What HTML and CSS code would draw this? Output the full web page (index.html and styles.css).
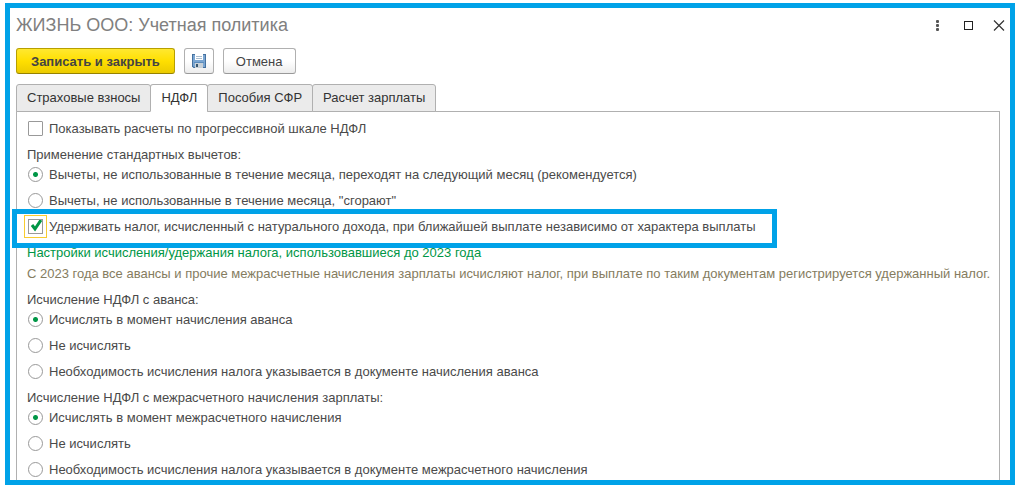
FILE: index.html
```html
<!DOCTYPE html>
<html lang="ru">
<head>
    <meta charset="UTF-8">
    <meta name="viewport" content="width=device-width, initial-scale=1.0">
    <title>ЖИЗНЬ ООО: Учетная политика</title>
    <link rel="stylesheet" href="styles.css">
</head>
<body>
    <div class="window">
        <header class="title-bar">
            <h1>ЖИЗНЬ ООО: Учетная политика</h1>
            <div class="window-controls">
                <button type="button" class="window-btn" aria-label="Ещё">
                    <svg width="16" height="16" viewBox="0 0 16 16" fill="#555">
                        <rect x="6" y="3" width="3" height="3" rx="1"/>
                        <rect x="6" y="7" width="3" height="3" rx="1"/>
                        <rect x="6" y="11" width="3" height="3" rx="1"/>
                    </svg>
                </button>
                <button type="button" class="window-btn" aria-label="Развернуть">
                    <svg width="16" height="16" viewBox="0 0 16 16" fill="none" stroke="#222">
                        <rect x="3.5" y="4.5" width="8" height="8"/>
                    </svg>
                </button>
                <button type="button" class="window-btn" aria-label="Закрыть">
                    <svg width="16" height="16" viewBox="0 0 16 16" fill="none" stroke="#333" stroke-width="1.2">
                        <path d="M2 3.500l10 10M12 3.500l-10 10"/>
                    </svg>
                </button>
            </div>
        </header>

        <div class="toolbar">
            <button type="button" class="btn btn-primary">Записать и закрыть</button>
            <button type="button" class="btn btn-icon" aria-label="Записать">
                <svg width="14" height="14" viewBox="0 0 14 14">
                    <path d="M0 0h14v14H1.500L0 12.500z" fill="#45719f"/>
                    <path d="M1 1h12v12H2l-1-1z" fill="#7ba6d2"/>
                    <rect x="3" y="0" width="8" height="6" fill="#fff"/>
                    <path d="M4 2.500h6M4 4.500h6" stroke="#a9bccd"/>
                    <path d="M2 8h10v1H2z" fill="#5d8dbd"/>
                    <rect x="3" y="9" width="8" height="5" fill="#c9d1d8"/>
                    <rect x="4" y="10" width="2" height="3" fill="#36566f"/>
                </svg>
            </button>
            <button type="button" class="btn btn-cancel">Отмена</button>
        </div>

        <div class="tabs" role="tablist">
            <button type="button" class="tab" role="tab">Страховые взносы</button>
            <button type="button" class="tab active" role="tab" aria-selected="true">НДФЛ</button>
            <button type="button" class="tab" role="tab">Пособия СФР</button>
            <button type="button" class="tab" role="tab">Расчет зарплаты</button>
        </div>

        <form class="panel">
            <label class="option"><input type="checkbox" name="progressive">Показывать расчеты по прогрессивной шкале НДФЛ</label>

            <h2 class="group-title">Применение стандартных вычетов:</h2>
            <label class="option"><input type="radio" name="deductions" checked>Вычеты, не использованные в течение месяца, переходят на следующий месяц (рекомендуется)</label>
            <label class="option"><input type="radio" name="deductions">Вычеты, не использованные в течение месяца, "сгорают"</label>
            <label class="option highlighted"><input type="checkbox" name="withhold" checked>Удерживать налог, исчисленный с натурального дохода, при ближайшей выплате независимо от характера выплаты</label>

            <a href="#" class="settings-link">Настройки исчисления/удержания налога, использовавшиеся до 2023 года</a>
            <p class="note">С 2023 года все авансы и прочие межрасчетные начисления зарплаты исчисляют налог, при выплате по таким документам регистрируется удержанный налог.</p>

            <h2 class="group-title">Исчисление НДФЛ с аванса:</h2>
            <label class="option"><input type="radio" name="advance" checked>Исчислять в момент начисления аванса</label>
            <label class="option"><input type="radio" name="advance">Не исчислять</label>
            <label class="option"><input type="radio" name="advance">Необходимость исчисления налога указывается в документе начисления аванса</label>

            <h2 class="group-title">Исчисление НДФЛ с межрасчетного начисления зарплаты:</h2>
            <label class="option"><input type="radio" name="interim" checked>Исчислять в момент межрасчетного начисления</label>
            <label class="option"><input type="radio" name="interim">Не исчислять</label>
            <label class="option"><input type="radio" name="interim">Необходимость исчисления налога указывается в документе межрасчетного начисления</label>
        </form>
    </div>
</body>
</html>
```

FILE: styles.css
```css
* {
    box-sizing: border-box;
}

body {
    margin: 0;
    padding: 3px 6px 7px 5px;
    height: 100vh;
    background-color: white;
    color: #4a4a4a;
    font-family: "Liberation Sans", Arial, sans-serif;
    font-size: 13px;
    line-height: 14px;
}

button {
    font-family: inherit;
    font-size: 13px;
    color: #444;
    cursor: pointer;
}

.window {
    display: flex;
    flex-direction: column;
    height: 100%;
    padding: 0 10px 0 6px;
    border: 5px solid #00a2e8;
    overflow: hidden;
}

.title-bar {
    display: flex;
    justify-content: space-between;
    align-items: center;
    height: 34px;
    flex-shrink: 0;
}

h1 {
    margin: 0;
    color: #808080;
    font-size: 18px;
    font-weight: normal;
    line-height: 20px;
}

.window-controls {
    display: flex;
    gap: 15px;
    margin-right: -8px;
}

.window-btn {
    display: flex;
    padding: 0;
    border: none;
    background: none;
}

.toolbar {
    display: flex;
    gap: 9px;
    margin: 6px 0 10px;
}

.btn {
    height: 26px;
    padding: 0 12px;
    border: 1px solid #b0b0b0;
    border-bottom-color: #999;
    border-radius: 3px;
    background: linear-gradient(#fff 50%, #ececec);
}

.btn-primary {
    padding: 0 14px;
    border-color: #b79f00;
    border-bottom-color: #968200;
    background: linear-gradient(#ffe830, #ffdf00 50%, #ebcb00);
    font-weight: bold;
}

.btn-icon {
    display: flex;
    align-items: center;
    justify-content: center;
    width: 30px;
    padding: 0;
}

.tabs {
    display: flex;
    flex-shrink: 0;
    z-index: 1;
}

.tab {
    height: 28px;
    padding: 0 10px 2px;
    margin-right: -1px;
    border: 1px solid #b0b0b0;
    border-radius: 3px 3px 0 0;
    background-color: #ebebeb;
    color: #333;
}

.tab.active {
    border-bottom-color: white;
    background-color: white;
}

.panel {
    display: flex;
    flex-direction: column;
    align-items: flex-start;
    flex: 1 0 auto;
    margin-top: -1px;
    padding: 4px 10px 0;
    border: 1px solid #b0b0b0;
}

.option {
    display: flex;
    align-items: center;
    gap: 6px;
    min-height: 26px;
    padding-left: 1px;
}

.option input {
    appearance: none;
    flex-shrink: 0;
    width: 15px;
    height: 15px;
    margin: 0 0 2px;
    border: 1px solid #999;
    border-radius: 1px;
    background-color: white;
}

.option input[type="radio"] {
    border-radius: 50%;
}

.option input[type="radio"]:checked {
    background-image: radial-gradient(circle, #009646 2px, transparent 3px);
}

.highlighted {
    position: relative;
}

.highlighted::after {
    content: "";
    position: absolute;
    top: -5px;
    right: -22px;
    bottom: -8px;
    left: -15px;
    border: 5px solid #00a2e8;
    pointer-events: none;
}

.option.highlighted input {
    border-radius: 0;
    outline: 1px solid #f8cc30;
    outline-offset: 3px;
    background-image: url('data:image/svg+xml,<svg xmlns="http://www.w3.org/2000/svg" viewBox="0 0 13 13"><path d="M3 5l3 4 6-9" fill="none" stroke="%23009646" stroke-width="3"/></svg>');
}

.group-title {
    margin: 0;
    padding-top: 6px;
    font-size: 13px;
    font-weight: normal;
}

.settings-link {
    padding-top: 6px;
    color: #009646;
    text-decoration: none;
}

.note {
    margin: 0;
    padding: 7px 0 6px;
    color: #857c60;
    white-space: nowrap;
}
```
